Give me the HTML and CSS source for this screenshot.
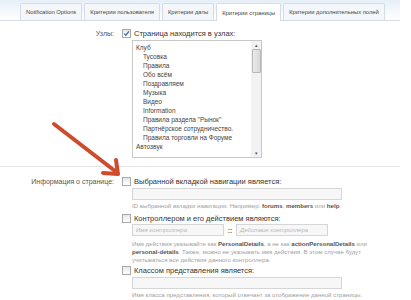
FILE: index.html
```html
<!DOCTYPE html>
<html lang="ru">
<head>
    <meta charset="UTF-8">
    <title>Критерии страницы</title>
    <link rel="stylesheet" href="styles.css">
</head>
<body>
    <div class="tabs">
        <span class="tab">Notification Options</span>
        <span class="tab">Критерии пользователя</span>
        <span class="tab">Критерии даты</span>
        <span class="tab active">Критерии страницы</span>
        <span class="tab">Критерии дополнительных полей</span>
    </div>

    <div class="form">
        <div class="row">
            <div class="label">Узлы:</div>
            <div class="ctrl">
                <div class="check">
                    <span class="box">
                        <svg width="7" height="7" viewBox="0 0 7 7"><path d="M1.2 3.6 L2.8 5.3 L5.9 1.3" fill="none" stroke="#3a5fa8" stroke-width="1.2"/></svg>
                    </span>
                    Страница находится в узлах:
                </div>
                <div class="listbox">
                    <ul class="items">
                        <li>Клуб</li>
                        <li class="sub">Тусовка</li>
                        <li class="sub">Правила</li>
                        <li class="sub">Обо всём</li>
                        <li class="sub">Поздравляем</li>
                        <li class="sub">Музыка</li>
                        <li class="sub">Видео</li>
                        <li class="sub">Information</li>
                        <li class="sub">Правила раздела "Рынок"</li>
                        <li class="sub">Партнёрское сотрудничество.</li>
                        <li class="sub">Правила торговли на Форуме</li>
                        <li>Автозвук</li>
                    </ul>
                    <div class="scroll">
                        <span class="arr">&#9652;</span>
                        <span class="thumb"></span>
                        <span class="track"></span>
                        <span class="arr">&#9662;</span>
                    </div>
                </div>
            </div>
        </div>

        <div class="sep"></div>

        <div class="row">
            <div class="label">Информация о странице:</div>
            <div class="ctrl">
                <div class="check"><span class="box"></span>Выбранной вкладкой навигации является:</div>
                <div class="field wide"></div>
                <p class="hint first">ID выбранной вкладки навигации. Например: <b>forums</b>, <b>members</b> или <b>help</b>.</p>

                <div class="check"><span class="box"></span>Контроллером и его действием являются:</div>
                <div class="pair">
                    <div class="field half"><i>Имя контроллера</i></div>
                    <span class="colons">::</span>
                    <div class="field half"><i>Действие контроллера</i></div>
                </div>
                <p class="hint second">Имя действия указывайте как <b>PersonalDetails</b>, а не как <b>actionPersonalDetails</b> или<br><b>personal-details</b>. Также, можно не указывать имя действия. В этом случае будут<br>учитываться все действия данного контроллера.</p>

                <div class="check"><span class="box"></span>Классом представления является:</div>
                <div class="field wide"></div>
                <p class="hint">Имя класса представления, который отвечает за отображение данной страницы.</p>
            </div>
        </div>
    </div>

    <svg class="arrow" width="80" height="60" viewBox="0 0 80 60">
        <line x1="3" y1="3" x2="64" y2="50" stroke="#cf4b2b" stroke-width="4" stroke-linecap="round"/>
        <polyline points="52,52 67,53 65,39" fill="none" stroke="#cf4b2b" stroke-width="4" stroke-linecap="round" stroke-linejoin="round"/>
    </svg>
</body>
</html>
```

FILE: styles.css
```css
body {
    margin: 0;
    font-family: "Liberation Sans", Arial, sans-serif;
    color: #333;
    background: #fff;
    position: relative;
}
.tabs {
    display: flex;
    gap: 2px;
    padding: 3px 0 0 20px;
    width: 380px;
    height: 17px;
    border-bottom: 1px solid #d4dce6;
    background: linear-gradient(to bottom, #e6eef7, #f6f9fc 60%, #fff);
    box-sizing: content-box;
}
.tab {
    display: flex;
    align-items: center;
    padding: 0 5px;
    height: 16px;
    font-size: 5.8px;
    color: #444;
    background: #f4f7fa;
    border: 1px solid #d4dce6;
    border-bottom: none;
    border-radius: 2px 2px 0 0;
}
.tab.active {
    background: #fff;
    height: 17px;
    margin-bottom: -1px;
}
.form {
    padding-top: 8px;
}
.row {
    display: grid;
    grid-template-columns: 114px 1fr;
    column-gap: 8px;
}
.label {
    text-align: right;
    font-size: 7px;
    color: #555;
    line-height: 9px;
}
.ctrl {
    padding-left: 10px;
}
.check {
    display: flex;
    align-items: center;
    height: 9px;
    margin-left: -10px;
    font-size: 7.5px;
    color: #333;
    white-space: nowrap;
}
.box {
    display: inline-flex;
    flex-shrink: 0;
    width: 7px;
    height: 7px;
    margin-right: 3px;
    border: 1px solid #a9a9a9;
    background: linear-gradient(to bottom, #e6e6e6, #fff);
}
.listbox {
    display: flex;
    width: 128px;
    height: 116px;
    margin-top: 2px;
    border: 1px solid #c8c8c8;
    background: #fff;
}
.items {
    flex: 1;
    margin: 0;
    padding: 2px 0 0 3px;
    list-style: none;
    font-size: 6.5px;
    line-height: 9px;
    color: #444;
}
.items .sub {
    padding-left: 7px;
}
.scroll {
    display: flex;
    flex-direction: column;
    align-items: center;
    width: 10px;
    background: #f2f2f2;
}
.arr {
    font-size: 5px;
    line-height: 8px;
    color: #555;
}
.thumb {
    width: 7px;
    height: 22px;
    border: 1px solid #b8b8b8;
    border-radius: 1px;
    background: linear-gradient(to right, #eaeaea, #d8d8d8);
}
.track {
    flex: 1;
}
.sep {
    height: 1px;
    width: 400px;
    margin: 8px 0 10px;
    background: #e6e6e6;
}
.field {
    height: 10px;
    border: 1px solid #d6d6d6;
    background: #f7f7f7;
    font-size: 6px;
    color: #b8b8b8;
    line-height: 10px;
    padding-left: 3px;
    box-sizing: content-box;
}
.field.wide {
    width: 205px;
    margin-top: 2px;
}
.pair {
    display: flex;
    align-items: center;
    margin-top: 1px;
}
.field.half {
    width: 87px;
}
.colons {
    width: 12px;
    text-align: center;
    font-size: 7px;
    font-weight: bold;
    color: #666;
}
.hint {
    margin: 2px 0 0;
    font-size: 6.1px;
    line-height: 8px;
    color: #a0a0a0;
    white-space: nowrap;
}
.hint.first {
    margin-bottom: 4px;
}
.hint.second {
    margin: 4px 0 2px;
}
.hint b {
    color: #555;
}
.arrow {
    position: absolute;
    left: 51px;
    top: 121px;
}
```
